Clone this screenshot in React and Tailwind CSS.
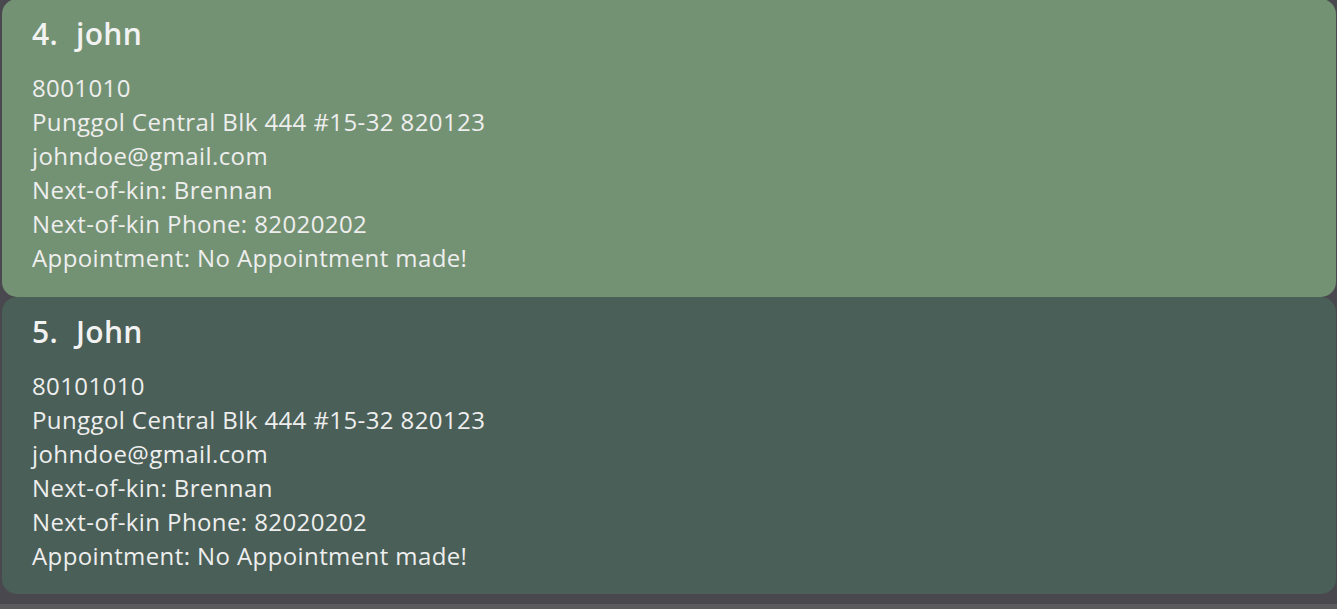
const people = [
  {
    index: 4,
    name: 'john',
    phone: '8001010',
    address: 'Punggol Central Blk 444 #15-32 820123',
    email: 'johndoe@gmail.com',
    kin: 'Brennan',
    kinPhone: '82020202',
    appointment: 'No Appointment made!',
    bg: 'bg-[#739273]',
  },
  {
    index: 5,
    name: 'John',
    phone: '80101010',
    address: 'Punggol Central Blk 444 #15-32 820123',
    email: 'johndoe@gmail.com',
    kin: 'Brennan',
    kinPhone: '82020202',
    appointment: 'No Appointment made!',
    bg: 'bg-[#4a5f57]',
  },
]

function PersonCard({ p, first }) {
  return (
    <div
      className={`${p.bg} ${first ? '-mt-px h-[298px]' : 'h-[297px]'} rounded-[15px] pl-[30px] pt-[15px] text-[#eeeeee]`}
    >
      <div className="flex text-[30px] font-semibold leading-[40px] tracking-[0.3px] text-[#f2f2f2]">
        <span>{p.index}.</span>
        <span className="ml-[18px]">{p.name}</span>
      </div>
      <div className="mt-[17px] text-[24px] leading-[34px] tracking-[0.4px]">
        <div>{p.phone}</div>
        <div>{p.address}</div>
        <div>{p.email}</div>
        <div>Next-of-kin: {p.kin}</div>
        <div>Next-of-kin Phone: {p.kinPhone}</div>
        <div>Appointment: {p.appointment}</div>
      </div>
    </div>
  )
}

export default function App() {
  return (
    <div className="h-[609px] overflow-hidden bg-[#48484e] font-['Open_Sans',sans-serif]">
      <div className="h-[604px] overflow-hidden pl-[2px] pr-[1px]">
        {people.map((p, i) => (
          <PersonCard key={p.index} p={p} first={i === 0} />
        ))}
      </div>
      <div className="h-[5px] bg-[#5a5a5f]" />
    </div>
  )
}
